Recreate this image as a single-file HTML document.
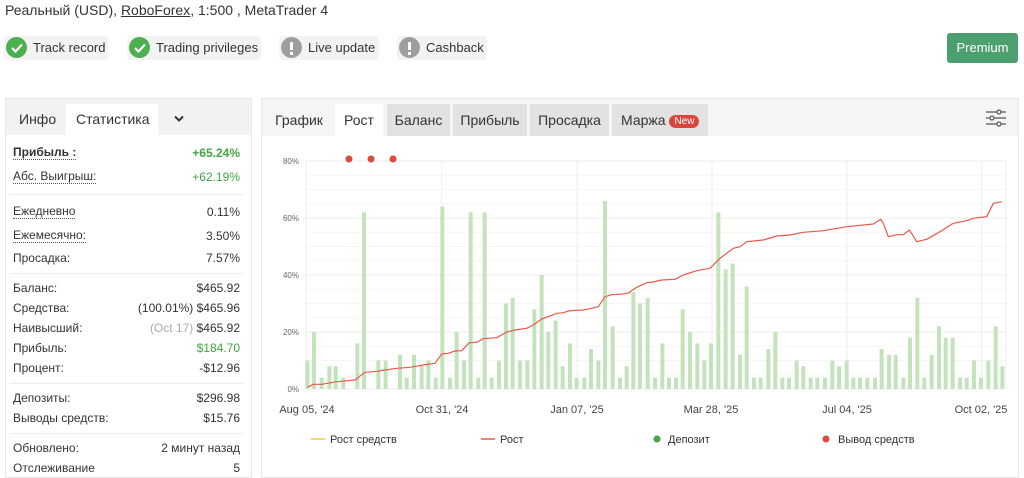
<!DOCTYPE html>
<html><head><meta charset="utf-8"><style>
*{box-sizing:border-box;margin:0;padding:0}
body{width:1024px;height:475px;overflow:hidden;background:#fff;font-family:"Liberation Sans",Arial,sans-serif;color:#333;position:relative}
.a{position:absolute}
.badge{position:absolute;top:36px;height:24px;background:#f3f3f3;border-radius:3px;font-size:13px;line-height:24px;color:#333;padding-left:29px}
.badge i{position:absolute;left:2px;top:1px;width:21px;height:21px;border-radius:50%}
.row{position:absolute;left:13px;width:227px;font-size:12px;color:#333}
.row span{position:absolute;right:0}
.u{border-bottom:1px dotted #555}
.tab{position:absolute;top:104px;height:32px;line-height:32px;font-size:14px;text-align:center;color:#333}
</style></head><body>
<div class="a" style="left:5px;top:2px;font-size:14px;color:#333">Реальный (USD), <span style="text-decoration:underline">RoboForex</span>, 1:500 , MetaTrader 4</div>

<div class="badge" style="left:4px;width:104px"><i style="background:#4caf50"></i><svg class="a" style="left:7px;top:7px" width="12" height="10"><path d="M1 5l3.5 3.5L11 1.5" stroke="#fff" stroke-width="2.2" fill="none"/></svg>Track record</div>
<div class="badge" style="left:127px;width:134px"><i style="background:#4caf50"></i><svg class="a" style="left:7px;top:7px" width="12" height="10"><path d="M1 5l3.5 3.5L11 1.5" stroke="#fff" stroke-width="2.2" fill="none"/></svg>Trading privileges</div>
<div class="badge" style="left:279px;width:100px"><i style="background:#9e9e9e"></i><b class="a" style="left:11px;top:6px;width:3px;height:8px;background:#fff"></b><b class="a" style="left:11px;top:16px;width:3px;height:3px;background:#fff"></b>Live update</div>
<div class="badge" style="left:397px;width:90px"><i style="background:#9e9e9e"></i><b class="a" style="left:11px;top:6px;width:3px;height:8px;background:#fff"></b><b class="a" style="left:11px;top:16px;width:3px;height:3px;background:#fff"></b>Cashback</div>
<div class="a" style="left:947px;top:33px;width:71px;height:30px;background:#4c9f6f;border-radius:3px;color:#fff;font-size:13px;line-height:30px;text-align:center">Premium</div>

<div class="a" style="left:5px;top:98px;width:247px;height:380px;border:1px solid #e8e8e8"></div>
<div class="a" style="left:6px;top:99px;width:245px;height:36px;background:#f2f2f2"></div>
<div class="a" style="left:66px;top:104px;width:92px;height:31px;background:#fff"></div>
<div class="a" style="left:19px;top:111px;font-size:14px">Инфо</div>
<div class="a" style="left:76px;top:111px;font-size:14px">Статистика</div>
<svg class="a" style="left:174px;top:115px" width="10" height="8"><path d="M1 1.5l4 4 4-4" stroke="#333" stroke-width="2" fill="none"/></svg>
<div class="row" style="top:145px"><b class="u">Прибыль :</b><span style="color:#43a543;font-weight:bold;top:1px">+65.24%</span></div>
<div class="row" style="top:169px"><span class="u" style="position:static">Абс. Выигрыш:</span><span style="color:#43a543;top:1px">+62.19%</span></div>
<div class="a" style="left:10px;top:194px;width:233px;border-top:1px solid #eee"></div>
<div class="row" style="top:204px"><span class="u" style="position:static">Ежедневно</span><span style="top:1px">0.11%</span></div>
<div class="row" style="top:228px"><span class="u" style="position:static">Ежемесячно:</span><span style="top:1px">3.50%</span></div>
<div class="row" style="top:251px">Просадка:<span>7.57%</span></div>
<div class="a" style="left:10px;top:273px;width:233px;border-top:1px solid #eee"></div>
<div class="row" style="top:281px">Баланс:<span>$465.92</span></div>
<div class="row" style="top:301px">Средства:<span>(100.01%) $465.96</span></div>
<div class="row" style="top:321px">Наивысший:<span><span style="position:static;color:#aaa">(Oct 17)</span> $465.92</span></div>
<div class="row" style="top:341px">Прибыль:<span style="color:#43a543">$184.70</span></div>
<div class="row" style="top:361px">Процент:<span>-$12.96</span></div>
<div class="a" style="left:10px;top:383px;width:233px;border-top:1px solid #eee"></div>
<div class="row" style="top:391px">Депозиты:<span>$296.98</span></div>
<div class="row" style="top:411px">Выводы средств:<span>$15.76</span></div>
<div class="a" style="left:10px;top:433px;width:233px;border-top:1px solid #eee"></div>
<div class="row" style="top:441px">Обновлено:<span>2 минут назад</span></div>
<div class="row" style="top:461px">Отслеживание<span>5</span></div>

<div class="a" style="left:261px;top:98px;width:758px;height:380px;border:1px solid #e8e8e8"></div>
<div class="a" style="left:262px;top:99px;width:756px;height:37px;background:#f5f5f5"></div>
<div class="tab" style="left:267px;width:64px">График</div>
<div class="tab" style="left:335px;width:48px;background:#fff">Рост</div>
<div class="tab" style="left:387px;width:63px;background:#e2e2e2">Баланс</div>
<div class="tab" style="left:453px;width:74px;background:#e2e2e2">Прибыль</div>
<div class="tab" style="left:530px;width:79px;background:#e2e2e2">Просадка</div>
<div class="tab" style="left:612px;width:96px;background:#e2e2e2;text-align:left;padding-left:9px">Маржа <span style="background:#d9443b;color:#fff;font-size:10px;border-radius:8px;padding:1px 5px;position:relative;top:-1px">New</span></div>
<svg class="a" style="left:985px;top:108px" width="22" height="20" fill="none" stroke="#555" stroke-width="1.2"><path d="M1 4h11M16 4h5M1 10h4M9 10h12M1 16h11M16 16h5"/><circle cx="14" cy="4" r="2"/><circle cx="7" cy="10" r="2"/><circle cx="14" cy="16" r="2"/></svg>

<svg id="ch" class="a" style="left:0;top:0" width="1024" height="475" font-family="Liberation Sans, Arial, sans-serif"></svg>
<script>
var s='';
var X0=306,X1=1006,Y0=389,k=2.85;
for(var p=0;p<=80;p+=5){var y=Y0-p*k;s+='<line x1="'+X0+'" x2="'+X1+'" y1="'+y+'" y2="'+y+'" stroke="'+(p%20==0?'#ececec':'#f5f5f5')+'"/>';}
[306,441.7,577,712,847,981.7,1006].forEach(function(x){s+='<line x1="'+x+'" x2="'+x+'" y1="161" y2="389" stroke="#eeeeee"/>';});
[[80,161],[60,218],[40,275],[20,332],[0,389]].forEach(function(a){s+='<text x="299" y="'+(a[1]+3)+'" font-size="8" fill="#666" text-anchor="end">'+a[0]+'%</text>';});
var L=[[112,10],[132,20],[155,4],[178,8],[197,8],[220,4],[262,16],[282,62],[325,10],[347,10],[390,12],[410,4],[432,12],[455,8],[475,10],[497,4],[517,64],[540,4],[560,20],[582,10],[602,62],[625,4],[644,62],[665,4],[687,10],[708,30],[728,32],[750,10],[772,10],[793,28],[815,40],[835,20],[857,24],[878,8],[900,16],[920,4],[943,4],[963,14],[985,10],[1005,66],[1028,22],[1050,4],[1070,8]];
var R=[[10,34],[30,30],[53,32],[75,4],[97,16],[117,4],[138,4],[158,28],[180,20],[202,16],[223,10],[243,16],[265,62],[287,42],[308,44],[330,12],[350,36],[372,4],[392,4],[415,14],[436,20],[457,4],[477,4],[500,10],[520,8],[542,4],[562,4],[585,4],[607,10],[627,8],[650,10],[670,4],[690,4],[712,4],[735,4],[755,14],[777,12],[797,12],[820,4],[840,18],[862,32],[883,4],[905,12],[927,22],[947,18],[968,18],[990,4],[1010,4],[1032,10],[1053,4],[1075,10],[1097,22],[1117,8]];
function bar(x,v){s+='<rect x="'+(x-2)+'" y="'+(Y0-v*k)+'" width="4" height="'+(v*k)+'" fill="#c3e3bd"/>';}
L.forEach(function(b){bar(270+b[0]/3,b[1]);});
R.forEach(function(b){bar(630+b[0]/3,b[1]);});
var lp=[[112,712],[130,703],[155,703],[200,695],[255,690],[285,667],[320,664],[380,655],[420,652],[460,645],[495,640],[515,612],[535,610],[555,603],[575,602],[598,578],[620,577],[640,566],[680,563],[710,546],[735,540],[770,535],[790,525],[815,507],[835,500],[860,490],[880,488],[900,482],[940,480],[960,476],[985,470],[1005,440],[1025,434],[1060,432],[1080,428]];
var rp=[[0,425],[20,412],[50,398],[70,396],[95,390],[135,388],[160,375],[200,362],[240,355],[270,325],[310,295],[330,290],[350,275],[400,270],[440,258],[480,255],[520,247],[580,242],[650,230],[730,222],[752,208],[760,220],[775,260],[800,254],[820,254],[838,240],[848,255],[860,275],[890,268],[930,245],[970,220],[1010,212],[1030,205],[1070,200],[1090,160],[1115,155]];
var pts=lp.map(function(a){return (270+a[0]/3).toFixed(1)+','+(150+a[1]/3).toFixed(1);}).concat(rp.map(function(a){return (630+a[0]/3).toFixed(1)+','+(150+a[1]/3).toFixed(1);}));
s+='<polyline points="'+pts.join(' ')+'" fill="none" stroke="#e8584a" stroke-width="1.2" stroke-linejoin="round"/>';
[349,371,393].forEach(function(x){s+='<circle cx="'+x+'" cy="159" r="3.5" fill="#de4a3a"/>';});
[["Aug 05, '24",307],["Oct 31, '24",442],["Jan 07, '25",577],["Mar 28, '25",711],["Jul 04, '25",847],["Oct 02, '25",981]].forEach(function(a){s+='<text x="'+a[1]+'" y="413" font-size="11" fill="#444" text-anchor="middle">'+a[0]+'</text>';});
s+='<line x1="311" x2="325" y1="439" y2="439" stroke="#f5c842" stroke-width="1.5"/><text x="330" y="443" font-size="11" fill="#333">Рост средств</text>';
s+='<line x1="481" x2="495" y1="439" y2="439" stroke="#e8584a" stroke-width="1.5"/><text x="500" y="443" font-size="11" fill="#333">Рост</text>';
s+='<circle cx="657" cy="439" r="3.5" fill="#43a543"/><text x="668" y="443" font-size="11" fill="#333">Депозит</text>';
s+='<circle cx="826" cy="439" r="3.5" fill="#de4a3a"/><text x="838" y="443" font-size="11" fill="#333">Вывод средств</text>';
document.getElementById('ch').innerHTML=s;
</script>
</body></html>
